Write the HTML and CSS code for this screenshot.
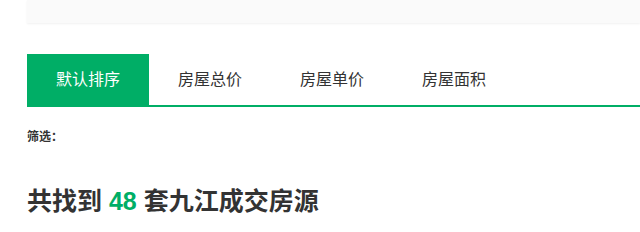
FILE: index.html
```html
<!DOCTYPE html>
<html lang="zh-CN">
  <head>
    <meta charset="UTF-8" />
    <title>九江成交房源</title>
    <link rel="stylesheet" href="styles.css">
  </head>
  <body>
    <div class="topbar"></div>
    <div class="wrap">
      <ul class="tabs">
        <li class="active">默认排序</li>
        <li>房屋总价</li>
        <li>房屋单价</li>
        <li>房屋面积</li>
      </ul>
      <div class="filter">筛选：</div>
      <h2 class="total">共找到 <span>48</span> 套九江成交房源</h2>
    </div>
  </body>
</html>
```

FILE: styles.css
```css
body {
  margin: 0;
  padding: 0;
  font-family: "Liberation Sans", "Noto Sans CJK SC", sans-serif;
  color: #333;
  background: #fff;
}
.topbar {
  margin-left: 27px;
  height: 23px;
  background: #fafafa;
  box-shadow: 0 1px 2px rgba(0, 0, 0, 0.06);
}
.wrap {
  padding-left: 27px;
}
.tabs {
  display: flex;
  list-style: none;
  margin: 31px 0 0;
  padding: 0;
  border-bottom: 2px solid #00ae66;
}
.tabs li {
  width: 122px;
  height: 51px;
  line-height: 51px;
  text-align: center;
  font-size: 16px;
  color: #333;
}
.tabs li.active {
  background: #00ae66;
  color: #fff;
}
.filter {
  margin-top: 20px;
  font-size: 12px;
  font-weight: bold;
  line-height: 20px;
}
.total {
  margin: 38px 0 0;
  font-size: 25px;
  font-weight: bold;
  line-height: 32px;
}
.total span {
  color: #00ae66;
}
```
